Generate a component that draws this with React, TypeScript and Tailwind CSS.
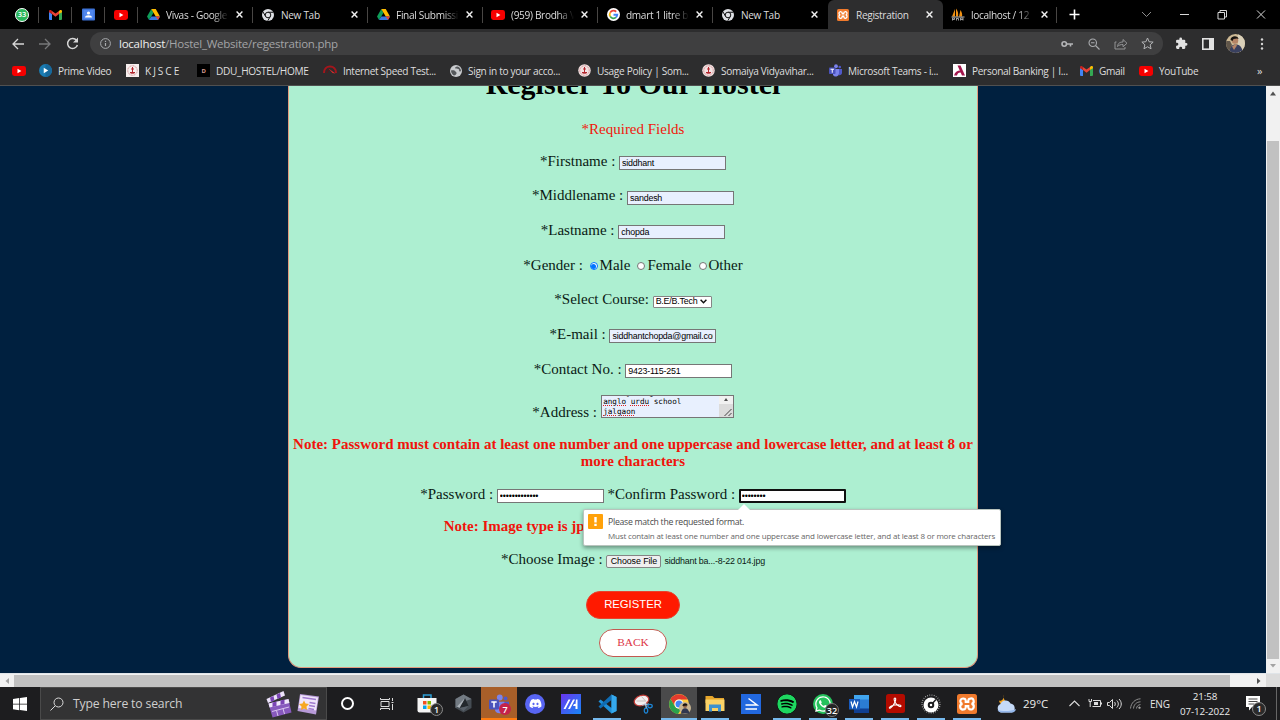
import type { ReactNode } from "react";
import { FaDiscord, FaSpotify, FaWhatsapp } from "react-icons/fa";

const UI = "font-['Open_Sans','Noto_Sans',sans-serif]";

/* ---------- small icons ---------- */
const YouTube = () => (
  <svg className="h-[10px] w-[14px] shrink-0" viewBox="0 0 14 10">
    <rect width="14" height="10" rx="2.4" fill="#f60000" />
    <path d="M5.5 2.8v4.4L9.4 5z" fill="#fff" />
  </svg>
);
const Gmail = () => (
  <svg className="h-[10px] w-[13px] shrink-0" viewBox="0 0 26 20">
    <path d="M0 3v15a2 2 0 0 0 2 2h4V8z" fill="#4285f4" />
    <path d="M26 3v15a2 2 0 0 1-2 2h-4V8z" fill="#34a853" />
    <path d="M6 8V2l7 5 7-5v6l-7 5.4z" fill="#ea4335" />
    <path d="M0 3c0-3 3-3.500 5-2l1 1v6L0 4.500z" fill="#c5221f" />
    <path d="M26 3c0-3-3-3.500-5-2l-1 1v6l6-3.500z" fill="#fbbc04" />
  </svg>
);
const Drive = () => (
  <svg className="h-[11px] w-[13px] shrink-0" viewBox="0 0 26 22">
    <path d="M8.500 0 0 15l4 7L13 7.500z" fill="#0f9d58" />
    <path d="M8.500 0h9L26 15h-8.500z" fill="#ffba00" />
    <path d="M8.500 15H26l-4 7H4z" fill="#3777e3" />
    <path d="M17.500 15H26l-4 7z" fill="#ea4335" />
  </svg>
);
const ChromeGrey = () => (
  <svg className="size-[12px] shrink-0" viewBox="0 0 24 24">
    <circle cx="12" cy="12" r="12" fill="#dfe1e5" />
    <path d="M12 6.500h11M7.200 14.700 1.800 5.500M16.700 14.700 11.500 23.700" stroke="#111" strokeWidth="2" />
    <circle cx="12" cy="12" r="5.600" fill="#dfe1e5" stroke="#111" strokeWidth="2" />
  </svg>
);
const Google = () => (
  <svg className="size-[13px] shrink-0" viewBox="0 0 26 26">
    <circle cx="13" cy="13" r="13" fill="#fff" />
    <g fill="none" strokeWidth="3.600">
      <path d="M18.300 7.500A7.600 7.600 0 0 0 6.400 9.200" stroke="#ea4335" />
      <path d="M6.400 9.200a7.600 7.600 0 0 0 0 7.600" stroke="#fbbc05" />
      <path d="M6.400 16.800a7.600 7.600 0 0 0 11.600 2" stroke="#34a853" />
      <path d="M18 18.800a7.600 7.600 0 0 0 2.600-5.300H13" stroke="#4285f4" />
    </g>
  </svg>
);
const Xampp = ({ big = false }: { big?: boolean }) => (
  <svg className={big ? "size-[20px] shrink-0" : "size-[12px] shrink-0"} viewBox="0 0 24 24">
    <rect width="24" height="24" rx="3" fill="#f07a2c" />
    <path
      d="M8 5.500a3.200 3.200 0 0 0-1.500 6.300A3.200 3.200 0 0 0 8 18.500c2.500 0 2.500-1.500 2.500-4h3c0 2.500 0 4 2.500 4a3.200 3.200 0 0 0 1.500-6.600A3.200 3.200 0 0 0 16 5.500c-2.500 0-2.500 1.500-2.500 4h-3c0-2.500 0-4-2.500-4z"
      fill="none"
      stroke="#fff"
      strokeWidth="2.600"
    />
  </svg>
);
const PhpMyAdmin = () => (
  <svg className="h-[13px] w-[14px] shrink-0" viewBox="0 0 28 26">
    <path d="M8 2v15H2zM10 1c4 5 5 10 4 16h-4zM19 4c3 5 4 9 3 13h-6z" fill="#f29111" />
    <path d="M1 18h26" stroke="#bbb" strokeWidth="2" />
    <path d="M3 25v-5h4v3H3M11 25v-5M11 21h4v4M19 25v-5h5v5M19 23h5" stroke="#aaa" strokeWidth="1.800" fill="none" />
  </svg>
);
const WhatsUnread = () => (
  <div className="relative flex size-[14px] items-center justify-center rounded-full border border-white bg-[#2ab65b] text-[7.500px] font-semibold leading-none text-white">
    33
  </div>
);
const Classroom = () => (
  <svg className="size-[13px]" viewBox="0 0 26 24">
    <rect width="26" height="24" rx="2" fill="#3d73d8" />
    <rect x="3" y="3" width="20" height="18" fill="#4f86ee" />
    <circle cx="13" cy="9" r="3.200" fill="#fff" />
    <path d="M6 18c0-6 14-6 14 0z" fill="#fff" />
  </svg>
);
const Seal = ({ square = false }: { square?: boolean }) => (
  <svg className="size-[13px] shrink-0" viewBox="0 0 26 26">
    {square ? <rect width="26" height="26" fill="#f7efee" /> : <circle cx="13" cy="13" r="12.500" fill="#f3e3e3" />}
    <circle cx="13" cy="13" r="9.500" fill="none" stroke="#cf8a8e" strokeWidth="2" strokeDasharray="2 1.200" />
    <path d="M13 6v10M10 10h6M8 17c2 2 8 2 10 0z" fill="#b3262e" stroke="#b3262e" strokeWidth="2" />
  </svg>
);
const Prime = () => (
  <svg className="size-[13px] shrink-0" viewBox="0 0 26 26">
    <circle cx="13" cy="13" r="13" fill="#1a7cb3" />
    <path d="M13 0a13 13 0 0 1 0 26z" fill="#17689b" />
    <path d="M9.500 7.500v11l9-5.500z" fill="#fff" />
  </svg>
);
const Ddu = () => (
  <div className="flex size-[13px] shrink-0 items-center justify-center bg-black text-[6px] font-bold leading-none text-[#d99a90]">
    D
  </div>
);
const Speed = () => (
  <svg className="h-[13px] w-[14px] shrink-0" viewBox="0 0 28 26">
    <path d="M2 18C2 10 7 5 14 5s12 5 12 13" fill="none" stroke="#a3161c" strokeWidth="4" />
    <path d="M8 18c0-4 3-7 6-7" fill="none" stroke="#6b1014" strokeWidth="2" />
    <path d="M11 9l14 10-6-1z" fill="#e02b2b" />
  </svg>
);
const Globe = () => (
  <svg className="size-[12px] shrink-0" viewBox="0 0 24 24">
    <circle cx="12" cy="12" r="12" fill="#c9cbce" />
    <path
      d="M15 3c-4 0-6 3-4 4s6 0 7 2-1 4 2 4c1 0 2-1 2-2-1-4-3-7-7-8zM2 11c4-1 8 0 9 2s3 2 2 4-3 4-5 4c-3-2-6-5-6-10z"
      fill="#55585b"
    />
  </svg>
);
const Teams = ({ big = false }: { big?: boolean }) => (
  <svg className={big ? "size-[20px] shrink-0" : "size-[13px] shrink-0"} viewBox="0 0 26 26">
    <circle cx="14" cy="4.500" r="3.800" fill="#7b83eb" />
    <circle cx="21.500" cy="6" r="2.600" fill="#5059c9" />
    <path d="M17 10h9v7a5 5 0 0 1-7 5z" fill="#5059c9" />
    <path d="M8 10h12v9a6.500 6.500 0 0 1-12 3z" fill="#7b83eb" />
    <rect y="7" width="13" height="13" rx="1.500" fill="#4b53bc" />
    <path d="M3 10.500h7M6.500 10.500v7" stroke="#fff" strokeWidth="2" />
  </svg>
);
const Axis = () => (
  <svg className="size-[13px] shrink-0" viewBox="0 0 26 26">
    <rect width="26" height="26" fill="#fff" />
    <path d="M9 3h6l9 20h-6z" fill="#a3174d" />
    <path d="M2 23c2-7 6-10 13-10l2 4c-5-1-8 1-9 6z" fill="#a3174d" />
  </svg>
);
const Close = () => (
  <svg className="size-[7px] shrink-0" viewBox="0 0 7 7">
    <path d="M.6.6l5.800 5.800M6.400.6.6 6.400" stroke="#f1f1f1" strokeWidth="1.400" />
  </svg>
);

/* ---------- tab strip ---------- */
const Tab = ({
  icon,
  label,
  fade = false,
  active = false,
  sep = true,
  width = "w-[115px]",
}: {
  icon: ReactNode;
  label: string;
  fade?: boolean;
  active?: boolean;
  sep?: boolean;
  width?: string;
}) => (
  <div className={`${width} relative flex h-[29px] shrink-0 items-center pl-[8px] ${active ? "rounded-t-[6px] bg-[#2d2d2e]" : ""}`}>
    <div className="flex w-[14px] justify-center">{icon}</div>
    <div
      className={`ml-[6px] w-[63px] overflow-hidden whitespace-nowrap text-[10.100px] leading-[16px] tracking-[-0.33px] text-[#dcdcdc] ${
        fade ? "[mask-image:linear-gradient(to_right,black_74%,transparent_100%)]" : ""
      }`}
    >
      {label}
    </div>
    <div className="ml-[7px]">
      <Close />
    </div>
    {sep && <div className="ml-auto h-[16px] w-px bg-[#484644]" />}
  </div>
);
const Pinned = ({ children }: { children: ReactNode }) => (
  <div className="flex h-[29px] w-[33px] shrink-0 items-center">
    <div className="flex flex-1 justify-center">{children}</div>
    <div className="h-[16px] w-px bg-[#484644]" />
  </div>
);

const TabStrip = () => (
  <div className="flex h-[29px] items-center bg-black pl-[6px]">
    <Pinned><WhatsUnread /></Pinned>
    <Pinned><Gmail /></Pinned>
    <Pinned><Classroom /></Pinned>
    <Pinned><YouTube /></Pinned>
    <Tab icon={<Drive />} label="Vivas - Google" fade />
    <Tab icon={<ChromeGrey />} label="New Tab" />
    <Tab icon={<Drive />} label="Final Submissi" fade />
    <Tab icon={<YouTube />} label="(959) Brodha V" fade />
    <Tab icon={<Google />} label="dmart 1 litre b" fade />
    <Tab icon={<ChromeGrey />} label="New Tab" sep={false} />
    <Tab icon={<Xampp />} label="Registration" active sep={false} />
    <Tab icon={<PhpMyAdmin />} label="localhost / 12" fade width="w-[114px]" />
    <svg className="ml-[12px] size-[11px]" viewBox="0 0 11 11">
      <path d="M5.500.5v10M.5 5.500h10" stroke="#fff" strokeWidth="1.600" />
    </svg>
    <svg className="ml-auto mr-[14px] h-[14px] w-[125px]" viewBox="0 0 125 14" fill="none" stroke="#d8d8d8">
      <path d="M1 4l4.500 4.500L10 4" stroke="#8c8c8c" />
      <path d="M39 6.500h9" />
      <path d="M77 4.500h6.500V11H77zM79 4.500v-2h6.500V9h-2" />
      <path d="M116 2.500l8 8M124 2.500l-8 8" />
    </svg>
  </div>
);

/* ---------- address bar ---------- */
const AddressBar = () => (
  <div className="flex h-[29px] items-center bg-[#2d2d2e] pl-[12px]">
    <svg className="h-[12px] w-[12px]" viewBox="0 0 12 12" fill="none" stroke="#d6d6d6" strokeWidth="1.300">
      <path d="M12 6H1.500M6 1 1 6l5 5" />
    </svg>
    <svg className="ml-[15px] h-[12px] w-[12px]" viewBox="0 0 12 12" fill="none" stroke="#77787a" strokeWidth="1.300">
      <path d="M0 6h10.500M6 1l5 5-5 5" />
    </svg>
    <svg className="ml-[15px] h-[13px] w-[13px]" viewBox="0 0 13 13" fill="none" stroke="#d6d6d6" strokeWidth="1.500">
      <path d="M10.600 3.500A5 5 0 1 0 11.400 8" />
      <path d="M12 .5v5H7z" fill="#d6d6d6" stroke="none" />
    </svg>
    <div className="ml-[11px] flex h-[23px] w-[1073px] items-center rounded-full bg-[#3f3f40] pl-[10px] pr-[9px]">
      <svg className="size-[11px]" viewBox="0 0 22 22" fill="none" stroke="#a9abae" strokeWidth="2">
        <circle cx="11" cy="11" r="9.800" />
        <path d="M11 10v6M11 5.500v2.500" strokeWidth="2.400" />
      </svg>
      <div className="ml-[8px] whitespace-nowrap text-[11.500px] leading-[18px] tracking-[-0.24px] text-[#a3a4a6]">
        <span className="text-[#eeeeee]">localhost</span>/Hostel_Website/regestration.php
      </div>
      <div className="ml-auto flex items-center">
        <svg className="h-[8px] w-[12px]" viewBox="0 0 24 16" fill="none" stroke="#b4b5b7" strokeWidth="3.200">
          <circle cx="6.500" cy="8" r="4.500" />
          <path d="M11 8h13M19 8v5" />
        </svg>
        <svg className="ml-[15px] size-[12px]" viewBox="0 0 24 24" fill="none" stroke="#a9abae" strokeWidth="2.200">
          <circle cx="9.500" cy="9.500" r="7.500" />
          <path d="M15 15l8 8M6 9.500h7" />
        </svg>
        <svg className="ml-[14px] h-[12px] w-[14px]" viewBox="0 0 28 24" fill="none" stroke="#97989a" strokeWidth="1.900">
          <path d="M5 8H2v14h20v-4" />
          <path d="M7 17c1-7 5-9 11-9V3l8 7.500-8 7V13c-5 0-8 1-11 4z" />
        </svg>
        <svg className="ml-[13px] size-[13px]" viewBox="0 0 26 26" fill="none" stroke="#b4b5b7" strokeWidth="2">
          <path d="M13 2l3.300 7.500 8 .7-6 5.400 1.800 8L13 19.500l-7.100 4.100 1.800-8-6-5.400 8-.7z" />
        </svg>
      </div>
    </div>
    <svg className="ml-[12px] size-[13px]" viewBox="0 0 24 24" fill="#e2e2e2">
      <path d="M20.500 11H19V7a2 2 0 0 0-2-2h-4V3.500a2.500 2.500 0 0 0-5 0V5H4a2 2 0 0 0-2 2v3.800h1.500a2.700 2.700 0 0 1 0 5.400H2V20a2 2 0 0 0 2 2h3.800v-1.500a2.700 2.700 0 0 1 5.400 0V22H17a2 2 0 0 0 2-2v-4h1.500a2.500 2.500 0 0 0 0-5z" />
    </svg>
    <svg className="ml-[14px] h-[12px] w-[12px]" viewBox="0 0 12 12">
      <rect x=".8" y=".8" width="10.400" height="10.400" fill="none" stroke="#e2e2e2" strokeWidth="1.600" />
      <rect x="7" y="1" width="4" height="10" fill="#e2e2e2" />
    </svg>
    <svg className="ml-[12px] size-[19px]" viewBox="0 0 38 38">
      <defs>
        <clipPath id="avatar"><circle cx="19" cy="19" r="19" /></clipPath>
      </defs>
      <g clipPath="url(#avatar)">
        <rect width="38" height="38" fill="#cdb994" />
        <path d="M24 0h14v38H24z" fill="#d9cfb8" />
        <path d="M6 38c0-12 6-17 14-17s13 6 13 17z" fill="#39405f" />
        <path d="M0 14h8l4 8-6 12H0z" fill="#60564a" />
        <circle cx="18" cy="13" r="6.500" fill="#b58466" />
        <path d="M9 12c0-9 15-10 16-2l-3-1-7 1-2 4z" fill="#17130f" />
        <path d="M12 25l7-5 3 3-6 9z" fill="#b58466" />
      </g>
    </svg>
    <svg className="ml-[15px] h-[12px] w-[4px]" viewBox="0 0 4 12" fill="#d6d6d6">
      <circle cx="2" cy="1.500" r="1.200" /><circle cx="2" cy="6" r="1.200" /><circle cx="2" cy="10.500" r="1.200" />
    </svg>
  </div>
);

/* ---------- bookmarks ---------- */
const Bookmark = ({ icon, label = "", cls }: { icon: ReactNode; label?: string; cls: string }) => (
  <div className={`${cls} flex shrink-0 items-center gap-[6px] whitespace-nowrap`}>
    {icon}
    <span>{label}</span>
  </div>
);
const Bookmarks = () => (
  <div className="flex h-[28px] items-center border-b border-[#505050] bg-[#2d2d2e] pb-[2px] pl-[12px] text-[10.100px] leading-[16px] tracking-[-0.32px] text-[#dedede]">
    <Bookmark icon={<YouTube />} cls="w-[27px]" />
    <Bookmark icon={<Prime />} label="Prime Video" cls="w-[87px]" />
    <Bookmark icon={<Seal square />} label="K J S C E" cls="w-[71px]" />
    <Bookmark icon={<Ddu />} label="DDU_HOSTEL/HOME" cls="w-[126px]" />
    <Bookmark icon={<Speed />} label="Internet Speed Test..." cls="w-[127px]" />
    <Bookmark icon={<Globe />} label="Sign in to your acco..." cls="w-[128px]" />
    <Bookmark icon={<Seal />} label="Usage Policy | Som..." cls="w-[124px]" />
    <Bookmark icon={<Seal />} label="Somaiya Vidyavihar..." cls="w-[127px]" />
    <Bookmark icon={<Teams />} label="Microsoft Teams - i..." cls="w-[124px]" />
    <Bookmark icon={<Axis />} label="Personal Banking | I..." cls="w-[127px]" />
    <Bookmark icon={<Gmail />} label="Gmail" cls="w-[59px]" />
    <Bookmark icon={<YouTube />} label="YouTube" cls="w-[118px]" />
    <span className="text-[11px]">»</span>
  </div>
);

/* ---------- registration form ---------- */
const Row = ({ children }: { children: ReactNode }) => (
  <div className="flex h-[34.700px] items-center justify-center gap-[3.700px]">{children}</div>
);
const FIELD =
  "mt-[3px] h-[14px] w-[107px] border border-[#767676] px-[2px] font-['Liberation_Sans',sans-serif] text-[8.900px] leading-[12px] text-black outline-none";
const Field = ({ label, value, auto = true }: { label: string; value: string; auto?: boolean }) => (
  <Row>
    <label>{label}</label>
    <input className={`${FIELD} tracking-[-0.2px] ${auto ? "bg-[#e8f0fe]" : "bg-white"}`} defaultValue={value} />
  </Row>
);
const Radio = ({ label, on = false }: { label: string; on?: boolean }) => (
  <label className="flex items-center gap-[2px]">
    <span
      className={`mt-[2px] flex size-[8px] items-center justify-center rounded-full border bg-white ${
        on ? "border-[#0075ff]" : "border-[#767676]"
      }`}
    >
      {on && <span className="size-[4.600px] rounded-full bg-[#0075ff]" />}
    </span>
    {label}
  </label>
);
const Misspelt = ({ children }: { children: ReactNode }) => (
  <span className="underline decoration-[#e02020] decoration-dotted decoration-1 underline-offset-[1px]">{children}</span>
);

const Tooltip = () => (
  <div className={`${UI} absolute left-[294px] top-[423px] flex h-[37px] w-[418px] rounded-[2px] border border-[#b9c4be] bg-white text-left shadow-[0_2px_4px_rgba(0,0,0,0.4)]`}>
    <svg className="absolute left-[154px] top-[-6px] h-[6px] w-[12px]" viewBox="0 0 12 6">
      <path d="M0 6l6-6 6 6z" fill="#fff" />
    </svg>
    <div className="ml-[4px] mt-[4px] flex size-[15px] shrink-0 items-center justify-center rounded-[1px] bg-[#ffa10a]">
      <svg className="h-[9px] w-[3px]" viewBox="0 0 3 9" fill="#fff">
        <path d="M.3 0h2.400v5.600H.3zM.3 6.800h2.400V9H.3z" />
      </svg>
    </div>
    <div className="ml-[5px] flex flex-col whitespace-nowrap text-[#4a4a4a]">
      <span className="mt-[6px] text-[8.700px] leading-[13px] tracking-[-0.27px]">Please match the requested format.</span>
      <span className="mt-[1px] text-[8px] leading-[12px] tracking-[-0.17px] text-[#666]">
        Must contain at least one number and one uppercase and lowercase letter, and at least 8 or more characters
      </span>
    </div>
  </div>
);

const Form = () => (
  <div className="relative ml-[288px] flow-root h-[582px] w-[690px] rounded-b-[13px] border border-t-0 border-[#e29a7c] bg-[#adefd1] text-center font-['Liberation_Serif',serif] text-[15px] leading-[17.300px] text-[#0a1a14]">
    <h1 className="mt-[-19px] h-[45px] whitespace-nowrap text-[30px] font-bold leading-[34px] text-black">Register To Our Hostel</h1>
    <p className="h-[32px] pt-[9px] text-[#f0180c]">*Required Fields</p>
    <Field label="*Firstname :" value="siddhant" />
    <Field label="*Middlename :" value="sandesh" />
    <Field label="*Lastname :" value="chopda" />
    <Row>
      <span>*Gender :</span>
      <span className="ml-[3px] flex gap-[7px]">
        <Radio label="Male" on />
        <Radio label="Female" />
        <Radio label="Other" />
      </span>
    </Row>
    <Row>
      <span>*Select Course:</span>
      <span className="mt-[3px] flex h-[12px] w-[59px] items-center justify-between rounded-[1px] border border-[#858585] bg-white pl-[2px] pr-[4px] font-['Liberation_Sans',sans-serif] text-[8.900px] leading-none tracking-[-0.2px] text-black">
        B.E/B.Tech
        <svg className="h-[5px] w-[7px]" viewBox="0 0 7 5" fill="none" stroke="#111" strokeWidth="1.500">
          <path d="M.6.8l2.900 2.900L6.400.8" />
        </svg>
      </span>
    </Row>
    <Field label="*E-mail :" value="siddhantchopda@gmail.com" />
    <Field label="*Contact No. :" value="9423-115-251" auto={false} />
    <div className="flex h-[45px] items-start justify-center gap-[3.700px]">
      <label className="mt-[17px]">*Address :</label>
      <div className="mt-[8px] flex h-[23px] w-[133px] justify-between overflow-hidden border border-[#767676] bg-[#e8f0fe]">
        <div className="mt-[-8px] whitespace-pre pl-[1.500px] text-left font-['DejaVu_Sans_Mono',monospace] text-[7.650px] leading-[9.500px] text-black">
          shivaji nagar,
          <br />
          <Misspelt>anglo</Misspelt> <Misspelt>urdu</Misspelt> school
          <br />
          <Misspelt>jalgaon</Misspelt>
        </div>
        <div className="flex w-[14px] flex-col bg-[#f1f1f1]">
          <svg className="h-[8px] w-[14px]" viewBox="0 0 14 8"><path d="M5 5l2-3 2 3z" fill="#505050" /></svg>
          <svg className="h-[13px] w-[14px] bg-[#dcdcdc]" viewBox="0 0 14 13">
            <path d="M5.500 12l7-7M9.500 12l3-3" stroke="#444" />
          </svg>
        </div>
      </div>
    </div>
    <p className="h-[46px] pt-[4px] font-bold text-[#f0140c]">
      Note: Password must contain at least one number and one uppercase and lowercase letter, and at least 8 or
      <br />
      more characters
    </p>
    <div className="flex h-[34px] items-center justify-center gap-[3.700px]">
      <label>*Password :</label>
      <input type="password" className={`${FIELD} bg-white tracking-[-0.15px]`} defaultValue="Siddhant@1234" />
      <label>*Confirm Password :</label>
      <input
        type="password"
        className="mt-[3px] h-[14px] w-[107px] rounded-[1px] border-2 border-[#101010] bg-white px-[1px] font-['Liberation_Sans',sans-serif] text-[8.900px] leading-[10px] tracking-[-0.15px] text-black outline-none"
        defaultValue="Siddhant"
      />
    </div>
    <p className="h-[31px] pt-[6px] font-bold text-[#f0140c]">Note: Image type is jpg, jpeg or png and size less than 1MB</p>
    <div className="flex h-[34px] items-center justify-center gap-[3.700px]">
      <label>*Choose Image :</label>
      <span className="mt-[3px] flex items-center gap-[3px] font-['Liberation_Sans',sans-serif] text-[8.900px] leading-none tracking-[-0.19px]">
        <button className="h-[13px] w-[55px] rounded-[2px] border border-[#858585] bg-[#efefef] tracking-[-0.1px] text-black">Choose File</button>
        <span>siddhant ba...-8-22 014.jpg</span>
      </span>
    </div>
    <button className="mx-auto mt-[14px] block h-[28px] w-[94px] rounded-full border border-[#e8412c] bg-[#ff1a00] font-['Liberation_Sans',sans-serif] text-[11.300px] text-white">
      REGISTER
    </button>
    <button className="mx-auto mt-[10px] block h-[28px] w-[68px] rounded-full border border-[#c25a50] bg-white text-[11.300px] text-[#dc3545]">
      BACK
    </button>
    <Tooltip />
  </div>
);

const Page = () => (
  <div className="flex h-[587px] overflow-hidden bg-[#00203f]">
    <div className="min-w-0 flex-1">
      <Form />
    </div>
    <div className="flex w-[14px] flex-col bg-[#f1f1f1]">
      <svg className="h-[15px] w-[14px]" viewBox="0 0 14 15"><path d="M4 9.500l3-4 3 4z" fill="#505050" /></svg>
      <div className="mx-[1px] mt-[40px] h-[518px] bg-[#c1c1c1]" />
      <svg className="h-[14px] w-[14px]" viewBox="0 0 14 14"><path d="M4 5l3 3.500L10 5z" fill="#a3a3a3" /></svg>
    </div>
  </div>
);

const HorizontalBar = () => (
  <div className="flex h-[14px] border-t border-[#dfe4e8] bg-[#f1f1f1]">
    <svg className="h-[13px] w-[14px]" viewBox="0 0 14 13"><path d="M9 4v6L5.500 7z" fill="#a3a3a3" /></svg>
    <div className="mt-[1px] h-[12px] w-[1216px] bg-[#c1c1c1]" />
    <svg className="ml-[22px] h-[13px] w-[14px]" viewBox="0 0 14 13"><path d="M5 4v6l3.500-3z" fill="#505050" /></svg>
    <div className="w-[14px] bg-[#dcdcdc]" />
  </div>
);

/* ---------- taskbar ---------- */
const App36 = ({ children, line = "", bg = "" }: { children: ReactNode; line?: string; bg?: string }) => (
  <div className={`relative flex h-[33px] w-[36px] shrink-0 items-center justify-center ${bg}`}>
    {children}
    {line && <div className={`absolute bottom-0 h-[2px] ${line}`} />}
  </div>
);
const RUN = "w-[28px] bg-[#76b9ed]";
const Badge = ({ children, cls }: { children: ReactNode; cls: string }) => (
  <div className={`absolute flex items-center justify-center rounded-full leading-none text-white ${cls}`}>{children}</div>
);

const Taskbar = () => (
  <div className="flex h-[33px] items-center bg-[#1d1d1f]">
    <div className="flex w-[40px] justify-center">
      <svg className="size-[14px]" viewBox="0 0 28 28" fill="#fff">
        <path d="M0 4l12.500-2v11.500H0zM14 1.800 28 0v13.500H14zM0 15h12.500v11.500L0 24.500zM14 15h14v13l-14-2z" />
      </svg>
    </div>
    <div className="flex h-[33px] w-[287px] items-center border border-[#4a4a4a] bg-[#333334] pl-[9px]">
      <svg className="size-[14px]" viewBox="0 0 28 28" fill="none" stroke="#dadada" strokeWidth="2">
        <circle cx="17" cy="11" r="9" /><path d="M10.500 17.500 1 27" />
      </svg>
      <span className="ml-[9px] whitespace-nowrap text-[12.200px] leading-[18px] tracking-[-0.15px] text-[#cfcfcf]">Type here to search</span>
      <svg className="ml-auto h-[28px] w-[26px]" viewBox="0 0 52 56">
        <path d="M1 18 35 2l3 9L4 26z" fill="#ece2fa" />
        <path d="M8 15l7-3 2 9-7 3zM21 9l7-3 2 9-7 3z" fill="#7b45b5" />
        <path d="M5 27l40-9 6 27-38 10z" fill="#8759bd" />
        <path d="M5 27l40-9 2 8-40 9z" fill="#f0e8fb" />
        <path d="M13 25l8-2v9l-8 2zM29 21l8-2v9l-8 2z" fill="#7b45b5" />
        <path d="M12 43l34-9M21 41l3 11M34 37l3 11" stroke="#d9c5ef" strokeWidth="2" />
      </svg>
      <svg className="ml-[5px] mr-[6px] h-[22px] w-[23px]" viewBox="0 0 46 44">
        <path d="M6 2l38 5-6 36L1 36z" fill="#b79ad8" />
        <path d="M7 4l35 5-4 26-35-5z" fill="#f0e6fb" />
        <path d="M11 9l27 4M25 19l12 2M24 25l12 2M23 31l11 2" stroke="#a07ad0" strokeWidth="3" />
        <path d="M14 15l3 6 7 1-5 5 1 7-6-3-6 3 1-7-5-5 7-1z" fill="#f7a823" />
      </svg>
    </div>
    <div className="flex w-[40px] justify-center">
      <div className="size-[13px] rounded-full border-[2.500px] border-white" />
    </div>
    <div className="flex w-[40px] justify-center">
      <svg className="size-[14px]" viewBox="0 0 14 14" fill="none" stroke="#dcdcdc">
        <path d="M1 4.500h8v5H1zM.5 1v1.500h9V1M.5 13v-1.500h9V13M12.500 1v3M12.500 7v6M11.500 5.500h2" />
      </svg>
    </div>
    <div className="w-[2px]" />
    <App36>
      <svg className="h-[19px] w-[20px]" viewBox="0 0 40 38">
        <path d="M13 9V2h15v7" fill="none" stroke="#2c9fd6" strokeWidth="3" />
        <path d="M1 8h38v25a4 4 0 0 1-4 4H5a4 4 0 0 1-4-4z" fill="#f5f5f5" />
        <path d="M12 14h7v7h-7z" fill="#f25022" /><path d="M21 14h7v7h-7z" fill="#7fba00" />
        <path d="M12 23h7v7h-7z" fill="#00a4ef" /><path d="M21 23h7v7h-7z" fill="#ffb900" />
      </svg>
      <Badge cls="left-[21px] top-[16px] size-[13px] border border-[#8a8a8a] bg-[#2a2a2a] text-[9px] font-semibold">1</Badge>
    </App36>
    <App36>
      <svg className="h-[19px] w-[17px]" viewBox="0 0 34 38">
        <path d="M17 1l16 9v18l-16 9-16-9V10z" fill="#454c53" />
        <path d="M17 1l16 9-12 4L8 24 1 28V10z" fill="#737b83" />
        <path d="M20 8l7 16-18 4z" fill="#23282d" />
        <path d="M20 8 9 28l-5-3z" fill="#aab1b8" />
        <path d="M9 28l18-4-10 10z" fill="#59616a" />
      </svg>
    </App36>
    <App36 bg="bg-[#a85f29]" line="w-[36px] bg-[#ff7b0f]">
      <Teams big />
      <Badge cls="left-[18px] top-[16px] size-[12px] bg-[#c4224a] text-[9px] font-semibold">7</Badge>
    </App36>
    <App36>
      <div className="flex size-[20px] items-center justify-center rounded-full bg-[#5865f2]"><FaDiscord className="size-[13px] text-white" /></div>
    </App36>
    <App36>
      <svg className="size-[20px]" viewBox="0 0 40 40">
        <defs><linearGradient id="armoury" x2="1" y2="1"><stop stopColor="#6a35ef" /><stop offset="1" stopColor="#1687f5" /></linearGradient></defs>
        <rect width="40" height="40" fill="url(#armoury)" />
        <path d="M5 30 15 11h4L9 30zM14 30l10-19h4L18 30zM30 11h3v19h-4v-6h-5l2-4h3z" fill="#fff" />
      </svg>
    </App36>
    <App36 line={RUN}>
      <svg className="size-[20px]" viewBox="0 0 40 40">
        <path d="M29 1l10 5v28l-10 5L3 15l4-4 22 17z" fill="#1f8fd8" />
        <path d="M29 1v11L7 29l-4-4z" fill="#0f6cb3" />
        <path d="M29 1l10 5v28l-10 5z" fill="#35a9ee" />
      </svg>
    </App36>
    <App36>
      <svg className="h-[20px] w-[20px]" viewBox="0 0 40 40">
        <ellipse cx="17" cy="13" rx="15" ry="10" fill="#f3eeee" stroke="#c03a35" strokeWidth="2.500" transform="rotate(-18 17 13)" />
        <path d="M7 14h18M17 5l9 10" stroke="#c7bcbc" strokeWidth="2" />
        <path d="M18 22l14-2M25 18l2 12" stroke="#bcd8ef" strokeWidth="2.500" />
        <ellipse cx="34" cy="24" rx="4.500" ry="3.500" fill="none" stroke="#1c84d4" strokeWidth="2.500" />
        <ellipse cx="26" cy="33" rx="3.500" ry="5" fill="none" stroke="#1c84d4" strokeWidth="2.500" />
      </svg>
    </App36>
    <App36 bg="bg-[#4a4a4b]" line="w-[36px] bg-[#76b9ed]">
      <svg className="size-[20px]" viewBox="0 0 40 40">
        <circle cx="20" cy="20" r="20" fill="#ffcd40" />
        <path d="M20 11h17.500A20 20 0 0 0 3 10l9 15a9 9 0 0 1 8-14z" fill="#e33b2e" />
        <path d="M3 10a20 20 0 0 0 15 30l9-14a9 9 0 0 1-15-1z" fill="#2ba24c" />
        <circle cx="20" cy="20" r="9" fill="#fff" /><circle cx="20" cy="20" r="7" fill="#4285f4" />
      </svg>
      <svg className="absolute left-[18px] top-[15px] size-[12px]" viewBox="0 0 24 24">
        <circle cx="12" cy="12" r="12" fill="#c9b691" />
        <path d="M4 23c1-14 15-14 17 0z" fill="#303750" /><circle cx="12" cy="8" r="4" fill="#8d6248" />
        <path d="M7 8c0-7 10-7 10-1z" fill="#15110e" />
      </svg>
    </App36>
    <App36 line={RUN}>
      <svg className="h-[17px] w-[20px]" viewBox="0 0 40 34">
        <path d="M1 2h14l4 4h19v10H1z" fill="#e6a62c" /><path d="M1 9h38v23H1z" fill="#fbd367" />
        <path d="M8 33V19h24v14h-6v-7H14v7z" fill="#3d92cf" />
      </svg>
    </App36>
    <App36>
      <svg className="size-[20px]" viewBox="0 0 40 40">
        <rect width="40" height="40" fill="#2268df" />
        <path d="M15 9l17 13H9M9 30h23" fill="none" stroke="#fff" strokeWidth="3" />
      </svg>
    </App36>
    <App36 line={RUN}><FaSpotify className="size-[20px] rounded-full bg-black text-[#1ed760]" /></App36>
    <App36 line={RUN}>
      <div className="flex size-[20px] items-center justify-center rounded-full bg-[#25c15c]"><FaWhatsapp className="size-[18px] text-white" /></div>
      <Badge cls="left-[20px] top-[16px] size-[14px] border border-[#777] bg-[#242424] text-[9px] font-semibold">32</Badge>
    </App36>
    <App36 line={RUN}>
      <svg className="h-[18px] w-[20px]" viewBox="0 0 40 36">
        <path d="M10 0h30v36H10z" fill="#2b7cd3" /><path d="M10 0h30v9H10z" fill="#41a5ee" /><path d="M10 27h30v9H10z" fill="#103f91" />
        <path d="M0 8h22v21H0z" fill="#185abd" />
        <path d="M4 13l3 11 4-11 4 11 3-11" fill="none" stroke="#fff" strokeWidth="2.500" />
      </svg>
    </App36>
    <App36 line={RUN}>
      <svg className="size-[19px]" viewBox="0 0 38 38">
        <rect width="38" height="38" rx="5" fill="#b30b00" />
        <path d="M18 8c4 0-1 15-9 20-4 2-3-3 4-5 6-2 17-2 17 1s-7 0-10-5c-4-5-5-11-2-11z" fill="none" stroke="#fff" strokeWidth="2.200" />
      </svg>
    </App36>
    <App36 line={RUN}>
      <svg className="size-[20px]" viewBox="0 0 40 40">
        <circle cx="20" cy="20" r="18" fill="none" stroke="#bbb" strokeWidth="2.500" strokeDasharray="1.500 3" />
        <circle cx="20" cy="22" r="15" fill="#fff" />
        <circle cx="20" cy="22" r="6.500" fill="#1d1d1f" /><path d="M19 23 30 11" stroke="#1d1d1f" strokeWidth="3" />
        <circle cx="20" cy="22" r="2.500" fill="#fff" />
      </svg>
    </App36>
    <App36 line={RUN}><Xampp big /></App36>
    <svg className="ml-[11px] h-[20px] w-[21px]" viewBox="0 0 42 40">
      <path d="M16 1c-2 9 2 16 11 17-6 8-20 5-21-5 5 3 11-4 10-12z" fill="#f5a623" />
      <path d="M10 37a9 9 0 0 1-1-17 11 11 0 0 1 20-1 9.500 9.500 0 0 1 3 18z" fill="#c5daf8" />
      <path d="M10 37a9 9 0 0 1-7-5c9 3 27 3 37-2a9 9 0 0 1-8 7z" fill="#94b7ec" />
    </svg>
    <span className="ml-[6px] w-[46px] text-[11.500px] leading-none text-[#eee]">29°C</span>
    <svg className="h-[7px] w-[11px]" viewBox="0 0 11 7" fill="none" stroke="#ddd" strokeWidth="1.100"><path d="M.5 6l5-5 5 5" /></svg>
    <svg className="ml-[8px] h-[10px] w-[14px]" viewBox="0 0 14 10" fill="none" stroke="#ddd">
      <path d="M5 1.500h7.500v6H4.500M13.500 3.500v2M1 0v2.500h2.500V0M2.200 2.500V8" /><path d="M6 3h4v3H6z" fill="#ddd" stroke="none" />
    </svg>
    <svg className="ml-[5px] h-[12px] w-[15px]" viewBox="0 0 15 12" fill="none" stroke="#ddd">
      <path d="M.5 4.500h2l3-3v9l-3-3h-2zM7.500 4c1 1 1 3 0 4M9.800 2.500c2 2 2 5 0 7M12 1c3 3 3 7 0 10" />
    </svg>
    <svg className="ml-[8px] size-[11px]" viewBox="0 0 11 11" fill="none" stroke="#8e8e8e">
      <path d="M.5 10.500C1 5 5 1 10.500.8M3.500 10.500c.3-4 3-6.500 7-6.700M6.500 10.500c.2-2 1.500-3.700 4-3.900" /><circle cx="9.500" cy="9.800" r=".8" fill="#ddd" />
    </svg>
    <span className="ml-[9px] w-[28px] text-[10px] leading-none tracking-[-0.2px] text-[#e6e6e6]">ENG</span>
    <div className="flex w-[54px] flex-col items-center whitespace-nowrap text-[9.800px] leading-[15px] tracking-[-0.1px] text-[#ececec]">
      <span>21:58</span>
      <span>07-12-2022</span>
    </div>
    <div className="relative ml-[14px] h-[16px] w-[20px]">
      <svg className="h-[15px] w-[14px]" viewBox="0 0 28 30">
        <path d="M0 0h28v22H12l-6 7v-7H0z" fill="#fff" /><path d="M5 6h18M5 11h18M5 16h12" stroke="#333" strokeWidth="1.800" />
      </svg>
      <Badge cls="left-[6px] top-[6px] size-[14px] border border-[#8a8a8a] bg-[#2a2a2a] text-[9px] font-semibold">1</Badge>
    </div>
    <div className="ml-auto mr-[3px] h-[33px] w-px bg-[#666]" />
  </div>
);

export default function App() {
  return (
    <div className={`${UI} flex h-[720px] w-[1280px] flex-col overflow-hidden`}>
      <TabStrip />
      <AddressBar />
      <Bookmarks />
      <Page />
      <HorizontalBar />
      <Taskbar />
    </div>
  );
}
